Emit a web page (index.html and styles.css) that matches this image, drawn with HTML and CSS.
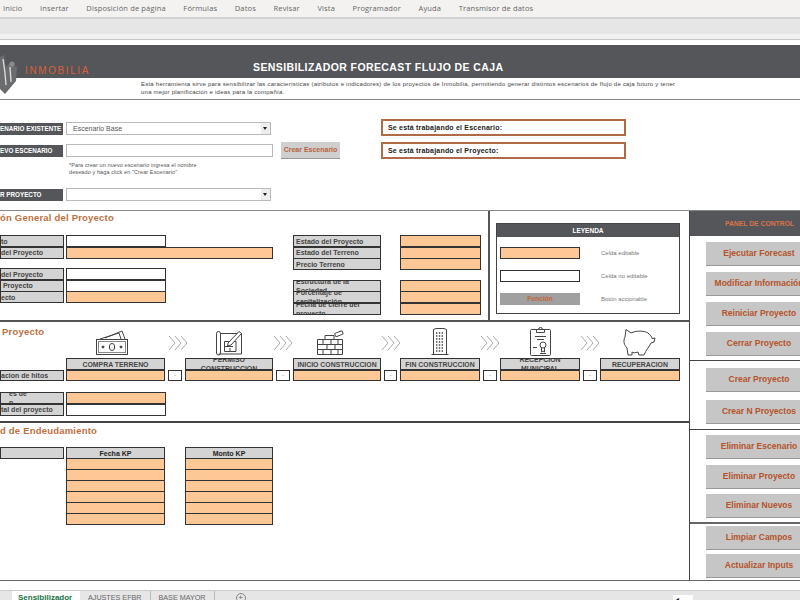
FILE: index.html
```html
<!DOCTYPE html>
<html lang="es">
<head>
    <meta charset="UTF-8">
    <title>Sensibilizador Forecast Flujo de Caja</title>
    <link rel="stylesheet" href="styles.css">
</head>
<body>
    <nav class="menu">
        <span>Inicio</span><span>Insertar</span><span>Disposición de página</span><span>Fórmulas</span><span>Datos</span>
        <span>Revisar</span><span>Vista</span><span>Programador</span><span>Ayuda</span><span>Transmisor de datos</span>
    </nav>
    <div class="ribbon"></div>

    <header class="banner">
        <svg class="logo" width="18" height="40" viewBox="0 0 18 40">
            <path d="M0 2 L4 0 L6 12 L9 9 L17 12 L16 26 L5 39 L0 34 Z" fill="#6b6c6e"/>
            <path d="M3 4 L5 18 L6 30 M10 12 L11 27" stroke="#d8d8d8" stroke-width="1.4" fill="none"/>
            <circle cx="12" cy="9" r="2.6" fill="#8a8b8d"/>
        </svg>
        <div class="banner-band">
            <span class="brand">INMOBILIA</span>
            <h1>SENSIBILIZADOR FORECAST FLUJO DE CAJA</h1>
        </div>
        <p class="banner-text">Esta herramienta sirve para sensibilizar las características (atributos e indicadores) de los proyectos de Inmobilia, permitiendo generar distintos escenarios de flujo de caja futuro y tener<br>una mejor planificación e ideas para la compañía.</p>
    </header>

    <section class="scenario">
        <div class="scenario-form">
            <div class="form-row">
                <div class="dark-label">ENARIO EXISTENTE</div>
                <div class="combo">Escenario Base<i class="combo-arrow"></i></div>
            </div>
            <div class="form-row form-row-new">
                <div class="dark-label">EVO ESCENARIO</div>
                <div class="text-input"></div>
                <div class="create-btn">Crear Escenario</div>
            </div>
            <p class="note">*Para crear un nuevo escenario ingresa el nombre<br>deseado y haga click en "Crear Escenario"</p>
            <div class="form-row form-row-project">
                <div class="dark-label">R PROYECTO</div>
                <div class="combo"><i class="combo-arrow"></i></div>
            </div>
        </div>
        <div class="status-boxes">
            <div class="status-box">Se está trabajando el Escenario:</div>
            <div class="status-box">Se está trabajando el Proyecto:</div>
        </div>
    </section>

    <main class="workspace">
        <div class="sheet">
            <section class="general">
                <div class="general-data">
                    <h2>ón General del Proyecto</h2>
                    <div class="general-cols">
                        <div class="left-fields">
                            <div class="row"><div class="cell label">to</div><div class="cell value"></div></div>
                            <div class="row"><div class="cell label">del Proyecto</div><div class="cell peach value-wide"></div></div>
                            <div class="row row-spaced"><div class="cell label">del Proyecto</div><div class="cell value"></div></div>
                            <div class="row"><div class="cell label">&nbsp;Proyecto</div><div class="cell value"></div></div>
                            <div class="row"><div class="cell label">ecto</div><div class="cell peach value"></div></div>
                        </div>
                        <div class="mid-fields">
                            <div class="mid-row"><div class="cell label">Estado del Proyecto</div><div class="cell peach"></div></div>
                            <div class="mid-row"><div class="cell label">Estado del Terreno</div><div class="cell peach"></div></div>
                            <div class="mid-row"><div class="cell label">Precio Terreno</div><div class="cell peach"></div></div>
                            <div class="mid-row row-spaced"><div class="cell label">Estructura de la Sociedad</div><div class="cell peach"></div></div>
                            <div class="mid-row"><div class="cell label">Porcentaje de capitalización</div><div class="cell peach"></div></div>
                            <div class="mid-row"><div class="cell label">Fecha de cierre del proyecto</div><div class="cell peach"></div></div>
                        </div>
                    </div>
                </div>
                <aside class="legend-area">
                    <div class="legend">
                        <div class="legend-head">LEYENDA</div>
                        <div class="legend-row"><div class="cell peach swatch"></div><span>Celda editable</span></div>
                        <div class="legend-row"><div class="cell swatch"></div><span>Celda no editable</span></div>
                        <div class="legend-row"><div class="swatch swatch-btn">Función</div><span>Botón accionable</span></div>
                    </div>
                </aside>
            </section>

            <section class="timeline">
                <h2 class="timeline-title">Proyecto</h2>
                <div class="icon-cell">
                    <svg class="icon-money" width="34" height="26" viewBox="0 0 34 26" fill="none" stroke="#444">
                        <rect x="1.5" y="9.5" width="31" height="15"/>
                        <rect x="3.5" y="11.5" width="27" height="11" stroke="#888"/>
                        <path d="M5 9 L24 3 L26 9 M10 8 L27 1 L30 9"/>
                        <rect x="14.5" y="13.5" width="5" height="7" rx="2.5"/>
                        <circle cx="8" cy="17" r="1" fill="#444"/><circle cx="26" cy="17" r="1" fill="#444"/>
                    </svg>
                </div>
                <div class="chevrons chevrons-first"><svg width="20" height="16" viewBox="0 0 20 16"><path d="M1 1 L7 8 L1 15 M7 1 L13 8 L7 15 M13 1 L19 8 L13 15"/></svg></div>
                <div class="icon-cell">
                    <svg width="28" height="26" viewBox="0 0 28 26" fill="none" stroke="#444">
                        <path d="M1.5 3.5 a2 2 0 0 1 4 0 V23 a2 2 0 0 1 -4 0 Z M5.5 3.5 H26.5 V24 H3.5"/>
                        <path d="M9.5 11.5 H21 V21.5 H9.5 Z M15 11.5 V15 M9.5 16.5 H18 M15 18 V21.5"/>
                        <path d="M13 13 L24 1.5 L26.5 3.5 L16 15 L12.5 16 Z" fill="#fff"/>
                    </svg>
                </div>
                <div class="chevrons"><svg width="20" height="16" viewBox="0 0 20 16"><path d="M1 1 L7 8 L1 15 M7 1 L13 8 L7 15 M13 1 L19 8 L13 15"/></svg></div>
                <div class="icon-cell">
                    <svg class="icon-bricks" width="28" height="26" viewBox="0 0 28 26" fill="none" stroke="#444">
                        <path d="M1.5 9.5 H26.5 V24.5 H1.5 Z M1.5 14.5 H26.5 M1.5 19.5 H26.5"/>
                        <path d="M9 5.5 H18 V9.5 M9 5.5 V9.5 M7 9.5 V14.5 M15 9.5 V14.5 M22 9.5 V14.5 M11 14.5 V19.5 M19 14.5 V19.5 M7 19.5 V24.5 M15 19.5 V24.5 M22 19.5 V24.5"/>
                        <rect x="19" y="2" width="8" height="3.5" rx="1" transform="rotate(-20 23 4)"/>
                    </svg>
                </div>
                <div class="chevrons"><svg width="20" height="16" viewBox="0 0 20 16"><path d="M1 1 L7 8 L1 15 M7 1 L13 8 L7 15 M13 1 L19 8 L13 15"/></svg></div>
                <div class="icon-cell">
                    <svg width="18" height="29" viewBox="0 0 18 29" fill="none" stroke="#444">
                        <path d="M2.5 27.5 V2.5 L5 1.5 H13 L15.5 2.5 V27.5 M0.5 27.5 H17.5"/>
                        <path d="M5 6 H13 M5 9 H13 M5 12 H13 M5 15 H13 M5 18 H13 M5 21 H13 M5 24 H13" stroke-dasharray="1.4 1.4" stroke-width="1.5"/>
                    </svg>
                </div>
                <div class="chevrons"><svg width="20" height="16" viewBox="0 0 20 16"><path d="M1 1 L7 8 L1 15 M7 1 L13 8 L7 15 M13 1 L19 8 L13 15"/></svg></div>
                <div class="icon-cell">
                    <svg width="23" height="30" viewBox="0 0 23 30" fill="none" stroke="#444">
                        <rect x="1.5" y="3.5" width="20" height="26" rx="1"/>
                        <path d="M7.5 3.5 V6.5 H15.5 V3.5 H13.5 A2 2 0 0 0 9.5 3.5 Z M6 10.5 H17 M8 13.5 H15 M4 21.5 H8"/>
                        <circle cx="14" cy="19" r="3"/>
                        <path d="M12.5 22 V26 L14 25 L15.5 26 V22 M11 27.5 H17"/>
                    </svg>
                </div>
                <div class="chevrons"><svg width="20" height="16" viewBox="0 0 20 16"><path d="M1 1 L7 8 L1 15 M7 1 L13 8 L7 15 M13 1 L19 8 L13 15"/></svg></div>
                <div class="icon-cell">
                    <svg width="36" height="28" viewBox="0 0 36 28" fill="none" stroke="#444">
                        <path d="M4 1.5 L9 5 C14 2.5 22 2.5 26 5 C28 6.5 30 9 30 10.5 L33 10 L32 14 L29 15 C27 19 24 22 22 27 H17 L16 24 C13 25 11 25 10 24 L10 27 H6 L5 20 C2 17 1 13 3 9 Z"/>
                    </svg>
                </div>

                <div></div>
                <div class="cell head-cell">COMPRA TERRENO</div>
                <div></div>
                <div class="cell head-cell">PERMISO CONSTRUCCION</div>
                <div></div>
                <div class="cell head-cell">INICIO CONSTRUCCION</div>
                <div></div>
                <div class="cell head-cell">FIN CONSTRUCCION</div>
                <div></div>
                <div class="cell head-cell">RECEPCION<br>MUNICIPAL</div>
                <div></div>
                <div class="cell head-cell">RECUPERACION</div>

                <div class="cell label">acion de hitos</div>
                <div class="cell peach"></div>
                <div class="cell tiny">-</div>
                <div class="cell peach"></div>
                <div class="cell tiny">-</div>
                <div class="cell peach"></div>
                <div class="cell tiny">-</div>
                <div class="cell peach"></div>
                <div class="cell tiny">-</div>
                <div class="cell peach"></div>
                <div class="cell tiny">-</div>
                <div class="cell peach"></div>

                <div class="timeline-extra">
                    <div class="row"><div class="cell label label-indent">es de<br>n</div><div class="cell peach value"></div></div>
                    <div class="row"><div class="cell label">tal del proyecto</div><div class="cell value"></div></div>
                </div>
            </section>

            <section class="debt">
                <h2>d de Endeudamiento</h2>
                <div class="debt-grid">
                    <div class="cell label"></div>
                    <div class="kp-col">
                        <div class="cell kp-head">Fecha KP</div>
                        <div class="cell peach"></div><div class="cell peach"></div><div class="cell peach"></div>
                        <div class="cell peach"></div><div class="cell peach"></div><div class="cell peach"></div>
                    </div>
                    <div></div>
                    <div class="kp-col">
                        <div class="cell kp-head">Monto KP</div>
                        <div class="cell peach"></div><div class="cell peach"></div><div class="cell peach"></div>
                        <div class="cell peach"></div><div class="cell peach"></div><div class="cell peach"></div>
                    </div>
                </div>
            </section>
        </div>

        <aside class="panel">
            <div class="panel-head">PANEL DE CONTROL</div>
            <div class="panel-group group-run">
                <div class="panel-btn">Ejecutar Forecast</div>
                <div class="panel-btn">Modificar Información</div>
                <div class="panel-btn">Reiniciar Proyecto</div>
                <div class="panel-btn">Cerrar Proyecto</div>
            </div>
            <div class="panel-group group-create">
                <div class="panel-btn">Crear Proyecto</div>
                <div class="panel-btn">Crear N Proyectos</div>
            </div>
            <div class="panel-group group-delete">
                <div class="panel-btn">Eliminar Escenario</div>
                <div class="panel-btn">Eliminar Proyecto</div>
                <div class="panel-btn">Eliminar Nuevos</div>
            </div>
            <div class="panel-group group-clean">
                <div class="panel-btn">Limpiar Campos</div>
                <div class="panel-btn">Actualizar Inputs</div>
            </div>
        </aside>
    </main>

    <footer class="tabs">
        <span class="tab tab-active">Sensibilizador</span>
        <span class="tab">AJUSTES EFBR</span>
        <span class="tab">BASE MAYOR</span>
        <span class="tab-add">+</span>
        <span class="tab-scroll"><i>&#9666;</i><i></i></span>
    </footer>
</body>
</html>
```

FILE: styles.css
```css
* { box-sizing: border-box; }

html, body {
    margin: 0;
    height: 600px;
    overflow: hidden;
}
body {
    background-color: #fff;
    font-family: 'Liberation Sans', Arial, sans-serif;
    color: #333;
}
h1, h2, p { margin: 0; }

/* Excel chrome */
.menu {
    display: flex;
    gap: 17.6px;
    height: 19px;
    padding: 3px 0 0 3px;
    background-color: #f3f2f1;
    border-bottom: 2px solid #d2d2d2;
    font-family: 'Open Sans', sans-serif;
    font-size: 7.5px;
    line-height: 11px;
    letter-spacing: 0.15px;
    color: #666;
}
.ribbon {
    height: 21px;
    background-color: #e6e6e6;
    border-bottom: 1px solid #c8c8c8;
    box-shadow: inset 0 -5px 0 #f1f1f1;
}

/* Banner */
.banner {
    position: relative;
    height: 55px;
    margin-top: 5px;
    border-bottom: 1px solid #888;
}
.banner-band {
    position: relative;
    height: 33px;
    background-color: #54565a;
}
.logo {
    position: absolute;
    top: 10px;
    left: 0;
    z-index: 2;
}
.brand {
    position: absolute;
    top: 20px;
    left: 25px;
    font-size: 10px;
    line-height: 12px;
    letter-spacing: 1.6px;
    color: #d9603a;
}
.banner-band h1 {
    padding: 16px 0 0 253px;
    font-size: 10.5px;
    line-height: 12px;
    letter-spacing: 0.4px;
    color: #fff;
}
.banner-text {
    padding: 2px 0 0 141px;
    font-size: 6px;
    line-height: 8px;
    letter-spacing: 0.23px;
    white-space: nowrap;
    color: #444;
}

/* Scenario selector */
.scenario {
    display: flex;
    height: 111px;
    border-bottom: 1px solid #888;
}
.scenario-form {
    width: 381px;
    padding-top: 22px;
}
.form-row {
    display: flex;
    align-items: center;
    height: 13px;
}
.form-row-new { margin-top: 9px; }
.form-row-project { margin-top: 11px; }
.dark-label {
    width: 63px;
    height: 12px;
    margin-right: 3px;
    overflow: hidden;
    background-color: #54565a;
    font-size: 6.3px;
    font-weight: bold;
    line-height: 12px;
    white-space: nowrap;
    color: #fff;
}
.combo {
    display: flex;
    align-items: center;
    width: 205px;
    height: 13px;
    padding-left: 6px;
    border: 1px solid #bbb;
    font-size: 7px;
    color: #555;
}
.combo-arrow {
    position: relative;
    width: 9px;
    height: 11px;
    margin-left: auto;
    background-color: #eee;
}
.combo-arrow::after {
    content: '';
    position: absolute;
    top: 4px;
    left: 2px;
    border: 2.5px solid transparent;
    border-top: 3px solid #222;
}
.text-input {
    width: 207px;
    height: 13px;
    border: 1px solid #bbb;
}
.create-btn {
    width: 59px;
    height: 17px;
    margin-left: 8px;
    background-color: #cfcfcf;
    border-bottom: 1px solid #999;
    font-size: 7px;
    font-weight: bold;
    line-height: 16px;
    text-align: center;
    color: #b8623c;
}
.note {
    height: 20px;
    padding: 5px 0 0 69px;
    font-size: 5.5px;
    line-height: 7px;
    letter-spacing: 0.1px;
    color: #555;
}
.status-boxes {
    display: flex;
    flex-direction: column;
    gap: 6px;
    width: 245px;
    padding-top: 19px;
}
.status-box {
    height: 17px;
    padding-left: 5px;
    border: 2px solid #b06a45;
    font-size: 7px;
    font-weight: bold;
    line-height: 13px;
    letter-spacing: 0.2px;
    color: #222;
}

/* Layout of the worksheet */
.workspace {
    display: flex;
    height: 370px;
    border-bottom: 1px solid #666;
}
.sheet {
    width: 689px;
}
.sheet h2 {
    font-size: 9.5px;
    line-height: 12px;
    letter-spacing: 0.2px;
    color: #c0703f;
}

/* Spreadsheet cells */
.cell {
    display: flex;
    align-items: center;
    overflow: hidden;
    border: 1px solid #333;
    background-color: #fff;
    font-size: 7px;
    line-height: 9px;
}
.peach { background-color: #fdc896; }
.label {
    background-color: #d4d4d4;
    color: #444;
    font-weight: bold;
}
.label-indent { padding-left: 8px; }

/* General info */
.general {
    display: flex;
    height: 111px;
    border-bottom: 2px solid #555;
}
.general-data {
    width: 490px;
    border-right: 2px solid #555;
}
.general-data h2 { padding-top: 1px; height: 24px; }
.general-cols {
    display: flex;
    gap: 20px;
}
.left-fields { width: 273px; }
.row {
    display: flex;
    height: 12px;
    margin-bottom: -0.5px;
}
.row-spaced { margin-top: 10px; }
.row .label {
    flex: none;
    width: 64px;
    margin-right: 2px;
    white-space: nowrap;
}
.value { width: 100px; }
.value-wide { width: 207px; }
.mid-row {
    display: grid;
    grid-template-columns: 88px 81px;
    column-gap: 19px;
    height: 12px;
    margin-bottom: -0.5px;
}
.mid-row .label { padding-left: 2px; }

/* Legend */
.legend-area {
    flex: 1;
    padding: 12px 9px 0 6px;
}
.legend {
    height: 91px;
    border: 1px solid #444;
}
.legend-head {
    height: 13px;
    background-color: #54565a;
    font-size: 6.5px;
    font-weight: bold;
    line-height: 13px;
    text-align: center;
    color: #fff;
}
.legend-row {
    display: flex;
    align-items: center;
    gap: 21px;
    height: 12px;
    margin: 10px 0 11px 3px;
    font-size: 6px;
    color: #777;
}
.swatch {
    width: 80px;
    height: 12px;
}
.swatch-btn {
    background-color: #a0a0a0;
    font-size: 6.5px;
    font-weight: bold;
    line-height: 12px;
    text-align: center;
    color: #c0643c;
}

/* Timeline */
.timeline {
    display: grid;
    grid-template-columns: 66px 99px 20px 88px 20px 88px 19px 80px 20px 80px 20px 80px;
    grid-template-rows: 36px 12px 11px;
    height: 101px;
    border-bottom: 2px solid #444;
}
.timeline-title {
    padding: 4px 0 0 2px;
}
.icon-cell {
    display: flex;
    align-items: flex-end;
    justify-content: center;
    padding-bottom: 2px;
}
.icon-money { margin-right: 8px; }
.icon-bricks { margin-right: 14px; }
.chevrons {
    padding-top: 13px;
}
.chevrons svg {
    display: block;
    fill: none;
    stroke: #aaa;
}
.chevrons-first { padding-left: 3px; }
.head-cell {
    justify-content: center;
    background-color: #d4d4d4;
    font-size: 6.9px;
    font-weight: bold;
    text-align: center;
    color: #444;
}
.timeline > .label {
    width: 64px;
    white-space: nowrap;
}
.tiny {
    justify-content: center;
    margin: 0 3px;
    font-size: 6px;
    color: #777;
}
.timeline-extra {
    grid-column: 1 / 3;
    width: 166px;
    padding-top: 11px;
}

/* Debt table */
.debt {
    height: 157px;
}
.debt h2 { padding-top: 2px; height: 24px; }
.debt-grid {
    display: grid;
    grid-template-columns: 66px 99px 20px 88px;
    align-items: start;
}
.debt-grid > .label {
    width: 64px;
    height: 12px;
}
.kp-col .cell {
    height: 12px;
    margin-bottom: -1px;
}
.kp-col .kp-head {
    justify-content: center;
    background-color: #d4d4d4;
    font-weight: bold;
    color: #222;
}

/* Control panel */
.panel {
    flex: none;
    width: 111px;
    border-left: 1px solid #444;
}
.panel-head {
    height: 25px;
    background-color: #54565a;
    font-size: 6.8px;
    font-weight: bold;
    line-height: 25px;
    padding-left: 29px;
    white-space: nowrap;
    text-align: center;
    color: #d9734a;
}
.panel-group {
    display: flex;
    flex-direction: column;
    padding-left: 16px;
    border-bottom: 1px solid #444;
}
.panel-btn {
    flex: none;
    width: 106px;
    height: 24px;
    background-color: #c6c6c6;
    border-bottom: 1px solid #999;
    font-size: 8.5px;
    font-weight: bold;
    line-height: 23px;
    white-space: nowrap;
    text-align: center;
    color: #b5532a;
}
.group-run { height: 125px; gap: 6px; padding-top: 6px; }
.group-create { height: 69px; gap: 8px; padding-top: 7px; }
.group-delete { height: 94px; gap: 5.5px; padding-top: 5px; border-bottom: 2px solid #666; }
.group-clean { height: 57px; gap: 4px; padding-top: 2px; border-bottom: none; }

/* Sheet tabs */
.tabs {
    display: flex;
    height: 20px;
    margin-top: 9px;
    padding-left: 12px;
    background-color: #e6e6e6;
    border-top: 1px solid #ccc;
    font-size: 7.2px;
    line-height: 13px;
    color: #666;
}
.tab {
    height: 20px;
    padding: 0 8px;
    border-right: 1px solid #bbb;
}
.tab-active {
    width: 68px;
    padding: 0 6px;
    background-color: #fff;
    border-right: none;
    font-size: 8px;
    font-weight: bold;
    color: #217346;
}
.tab-add {
    width: 10px;
    height: 10px;
    margin: 2px 0 0 21px;
    border: 1px solid #888;
    border-radius: 50%;
    font-size: 8px;
    line-height: 8px;
    text-align: center;
}
.tab-scroll {
    display: flex;
    margin: 4px 0 0 427px;
}
.tab-scroll i {
    width: 10px;
    height: 10px;
    background-color: #fff;
    font-style: normal;
    font-size: 6px;
    line-height: 8px;
    text-align: center;
    color: #222;
}
```
